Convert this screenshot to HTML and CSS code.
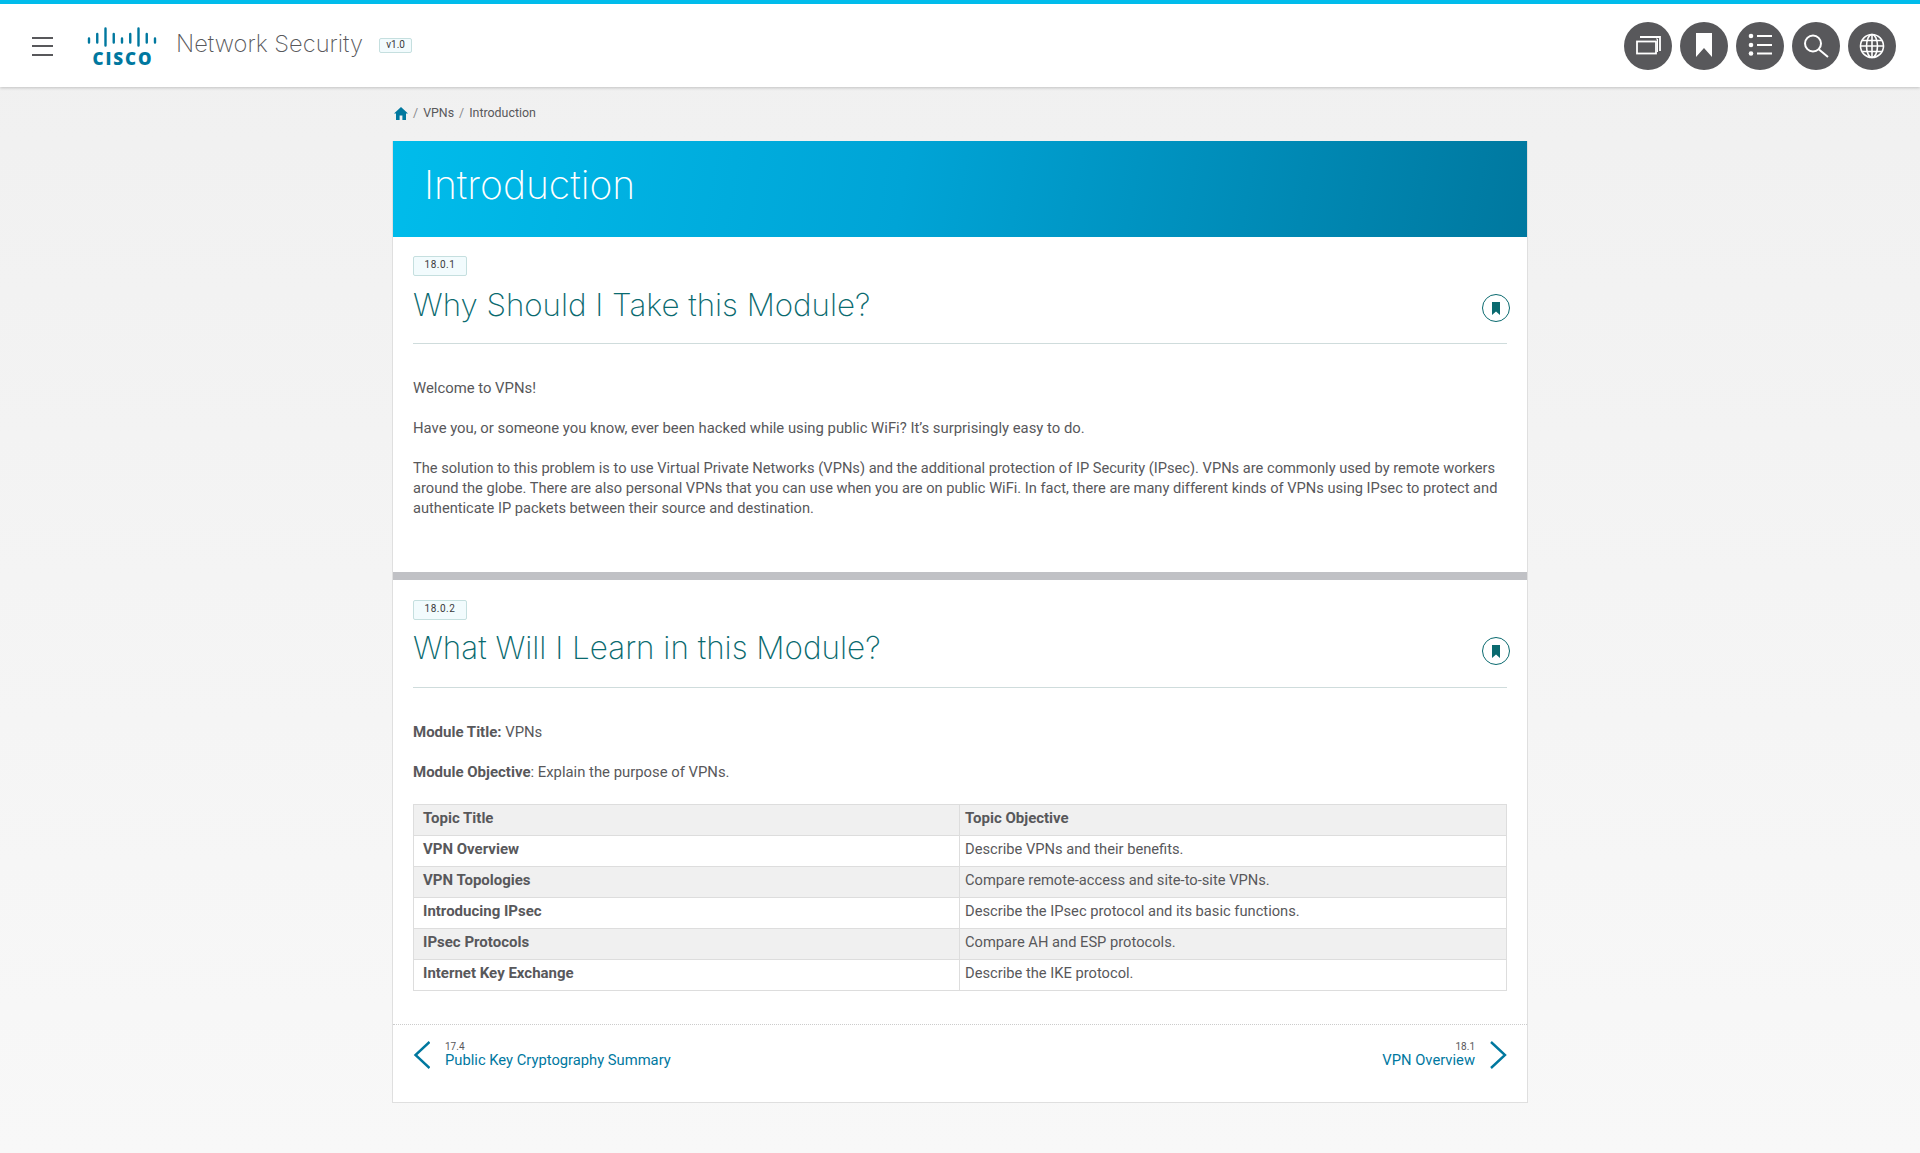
FILE: index.html
```html
<!DOCTYPE html>
<html lang="en">
  <head>
    <meta charset="UTF-8" />
    <title>Introduction</title>
    <link rel="stylesheet" href="styles.css">
  </head>
  <body>
    <header class="topbar">
      <button class="menu-btn" type="button" aria-label="Menu"><span></span><span></span><span></span></button>
      <div class="logo">
        <svg width="72" height="20" viewBox="0 0 72 20">
          <g stroke="#00789f" stroke-width="2.400" stroke-linecap="round">
            <path d="M3 11.500v4M11.250 7v8.500M19.500 1.500v17M27.750 7v8.500M36 11.500v4M44.250 7v8.500M52.500 1.500v17M60.750 7v8.500M69 11.500v4" />
          </g>
        </svg>
        <span class="logo-word">CISCO</span>
      </div>
      <span class="course-title">Network Security</span>
      <span class="version">v1.0</span>
      <div class="tools">
        <button class="tool" type="button" aria-label="Open pages">
          <svg width="26" height="26" viewBox="0 0 26 26" fill="none" stroke="#fff" stroke-width="1.800"><rect x="2" y="8.500" width="19" height="12" /><path d="M5 4h20v14" /><path d="M21 6h1.500v13" stroke-width="1" /></svg>
        </button>
        <button class="tool" type="button" aria-label="Bookmarks">
          <svg width="26" height="26" viewBox="0 0 26 26" fill="#fff"><path d="M5 0h16v24l-8-9-8 9z" /></svg>
        </button>
        <button class="tool" type="button" aria-label="Contents">
          <svg width="26" height="26" viewBox="0 0 26 26" fill="#fff"><circle cx="4" cy="3" r="2.300" /><circle cx="4" cy="12" r="2.300" /><circle cx="4" cy="20.500" r="2.300" /><path d="M10 2h15v2H10zM10 11h15v2H10zM10 19.500h15v2H10z" /></svg>
        </button>
        <button class="tool" type="button" aria-label="Search">
          <svg width="26" height="26" viewBox="0 0 26 26" fill="none" stroke="#fff" stroke-width="2"><circle cx="10" cy="10.500" r="8" /><path d="M16 16.500l9 7.500" /></svg>
        </button>
        <button class="tool" type="button" aria-label="Language">
          <svg width="26" height="26" viewBox="0 0 26 26" fill="none" stroke="#fff" stroke-width="1.600"><circle cx="13" cy="13" r="11.500" /><ellipse cx="13" cy="13" rx="5.500" ry="11.500" /><path d="M13 1.500v23M1.500 13h23M3.200 7.500h19.600M3.200 18.500h19.600" /></svg>
        </button>
      </div>
    </header>

    <main class="page">
      <nav class="crumbs">
        <svg class="home" width="14" height="13" viewBox="0 0 14 13" fill="#00789f"><path d="M7 0L0 6.500h2V13h3.600V8.500h2.800V13H12V6.500h2z" /></svg>
        <span class="sep">/</span><span>VPNs</span><span class="sep">/</span><span>Introduction</span>
      </nav>

      <article class="card">
        <h1 class="banner">Introduction</h1>

        <section class="topic">
          <span class="num">18.0.1</span>
          <div class="topic-head">
            <h2>Why Should I Take this Module?</h2>
            <span class="mark"><svg width="10" height="13" viewBox="0 0 10 13" fill="#0a6a6f"><path d="M1 0h8v13L5 9.500 1 13z" /></svg></span>
          </div>
          <div class="topic-body">
            <p>Welcome to VPNs!</p>
            <p>Have you, or someone you know, ever been hacked while using public WiFi? It’s surprisingly easy to do.</p>
            <p class="long">The solution to this problem is to use Virtual Private Networks (VPNs) and the additional protection of IP Security (IPsec). VPNs are commonly used by remote workers around the globe. There are also personal VPNs that you can use when you are on public WiFi. In fact, there are many different kinds of VPNs using IPsec to protect and authenticate IP packets between their source and destination.</p>
          </div>
        </section>

        <section class="topic second">
          <span class="num">18.0.2</span>
          <div class="topic-head">
            <h2>What Will I Learn in this Module?</h2>
            <span class="mark"><svg width="10" height="13" viewBox="0 0 10 13" fill="#0a6a6f"><path d="M1 0h8v13L5 9.500 1 13z" /></svg></span>
          </div>
          <div class="topic-body">
            <p><b>Module Title:</b> VPNs</p>
            <p><b>Module Objective</b>: Explain the purpose of VPNs.</p>
            <table>
              <tr><th>Topic Title</th><th>Topic Objective</th></tr>
              <tr><td><b>VPN Overview</b></td><td>Describe VPNs and their benefits.</td></tr>
              <tr><td><b>VPN Topologies</b></td><td>Compare remote-access and site-to-site VPNs.</td></tr>
              <tr><td><b>Introducing IPsec</b></td><td>Describe the IPsec protocol and its basic functions.</td></tr>
              <tr><td><b>IPsec Protocols</b></td><td>Compare AH and ESP protocols.</td></tr>
              <tr><td><b>Internet Key Exchange</b></td><td>Describe the IKE protocol.</td></tr>
            </table>
          </div>
        </section>

        <footer class="pager">
          <a class="pager-link" href="#">
            <svg width="17" height="28" viewBox="0 0 17 28" fill="none" stroke="#00789f" stroke-width="2.400"><path d="M16.500 1L2.500 14l14 13" /></svg>
            <span class="pager-text"><small>17.4</small>Public Key Cryptography Summary</span>
          </a>
          <a class="pager-link next" href="#">
            <span class="pager-text"><small>18.1</small>VPN Overview</span>
            <svg width="17" height="28" viewBox="0 0 17 28" fill="none" stroke="#00789f" stroke-width="2.400"><path d="M1 1l14 13L1 27" /></svg>
          </a>
        </footer>
      </article>
    </main>
  </body>
</html>
```

FILE: styles.css
```css
* {
  margin: 0;
  padding: 0;
  box-sizing: border-box;
}
body {
  min-height: 1153px;
  background: linear-gradient(#f0f0f0, #f8f8f8);
  font-family: Roboto, "Liberation Sans", sans-serif;
  font-size: 14.85px;
  line-height: 20px;
  color: #58585b;
}
b,
th {
  font-size: 15px;
  font-weight: bold;
}
button {
  border: none;
  background: none;
  cursor: pointer;
}

/* top bar */
.topbar {
  height: 87px;
  display: flex;
  align-items: center;
  padding-left: 32px;
  padding-right: 24px;
  background: #fff;
  border-top: 4px solid #00bceb;
  box-shadow: 0 1px 3px rgba(0, 0, 0, 0.2);
}
.menu-btn {
  width: 21px;
  margin-top: 1px;
  display: flex;
  flex-direction: column;
  gap: 6.5px;
}
.menu-btn span {
  height: 2px;
  background: #58585b;
}
.logo {
  width: 72px;
  margin-left: 33px;
  margin-top: 2px;
  display: flex;
  flex-direction: column;
  align-items: center;
}
.logo svg {
  display: block;
}
.logo-word {
  margin-top: 3px;
  padding-left: 2px;
  font-family: "Open Sans", sans-serif;
  font-weight: 800;
  font-size: 17px;
  line-height: 17px;
  letter-spacing: 1.9px;
  color: #00789f;
}
.course-title {
  margin-left: 18px;
  margin-top: -4px;
  font-family: Inter, sans-serif;
  font-weight: 200;
  font-size: 23.7px;
  color: #58585b;
}
.version {
  margin-left: 16px;
  width: 33px;
  height: 15px;
  border: 1px solid #c5dfdf;
  border-radius: 2px;
  background: #f2fbfd;
  font-size: 10px;
  line-height: 12px;
  text-align: center;
  color: #39393b;
}
.tools {
  margin-left: auto;
  display: flex;
  gap: 8px;
}
.tool {
  width: 48px;
  height: 48px;
  border-radius: 50%;
  background: #58585b;
  display: flex;
  align-items: center;
  justify-content: center;
}

/* page */
.page {
  width: 1136px;
  margin: 0 auto;
}
.crumbs {
  height: 54px;
  display: flex;
  align-items: center;
  gap: 5px;
  padding-left: 2px;
  padding-bottom: 2px;
  font-size: 12.4px;
}
.sep {
  color: #8a8a8d;
}
.card {
  border: 1px solid #dfdfdf;
  border-top: none;
  background: #fff;
}
.banner {
  height: 96px;
  padding: 16px 31px;
  background: linear-gradient(100deg, #00bceb 0%, #00a4d6 45%, #00789f 100%);
  font-family: Inter, sans-serif;
  font-weight: 200;
  font-size: 39px;
  line-height: 56px;
  color: #fff;
}
.topic {
  padding: 19px 20px 0;
  height: 335px;
}
.topic.second {
  height: 453px;
  border-top: 8px solid #c0c1c5;
  padding-top: 20px;
  border-bottom: 1px dotted #ccc;
}
.num {
  display: block;
  width: 54px;
  height: 20px;
  border: 1px solid #c5dfdf;
  border-radius: 2px;
  background: #f2fbfd;
  font-size: 10px;
  letter-spacing: 0.5px;
  line-height: 15px;
  text-align: center;
  color: #39393b;
}
.topic-head {
  height: 68px;
  display: flex;
  justify-content: space-between;
  align-items: center;
  border-bottom: 1px solid #cfdcdc;
  padding-bottom: 10px;
}
.second .topic-head {
  padding-bottom: 12px;
}
.topic-head h2 {
  font-family: Inter, sans-serif;
  font-weight: 200;
  font-size: 31.3px;
  line-height: 40px;
  color: #0a6a6f;
}
.second .topic-head h2 {
  font-size: 31.45px;
}
.mark {
  width: 28px;
  height: 28px;
  margin-right: -3px;
  margin-top: 7px;
  border: 1px solid #0a6a6f;
  border-radius: 50%;
  display: flex;
  align-items: center;
  justify-content: center;
}
.topic-body {
  padding-top: 34px;
}
.topic-body p {
  margin-bottom: 20px;
}
.topic-body p.long {
  font-size: 14.65px;
}
table {
  width: 100%;
  margin-top: 22px;
  border-collapse: collapse;
  table-layout: fixed;
}
th,
td {
  height: 31px;
  padding: 0 5px 4px 9px;
  border: 1px solid #ddd;
  text-align: left;
  vertical-align: middle;
}
td {
  font-size: 14.7px;
}
td:first-child,
th:first-child {
  width: 546px;
}
td:nth-child(2),
th:nth-child(2) {
  padding-left: 5px;
}
tr:nth-child(odd) {
  background: #f0f0f0;
}

/* pager */
.pager {
  height: 77px;
  display: flex;
  justify-content: space-between;
  padding: 16px 20px 0;
}
.pager-link {
  display: flex;
  gap: 15px;
  align-items: flex-start;
  color: #00789f;
  text-decoration: none;
}
.pager-link.next {
  text-align: right;
}
.pager-text {
  display: block;
  font-size: 14.75px;
  line-height: 16px;
}
.pager-text small {
  display: block;
  font-size: 10px;
  line-height: 11px;
  color: #58585b;
}
```
